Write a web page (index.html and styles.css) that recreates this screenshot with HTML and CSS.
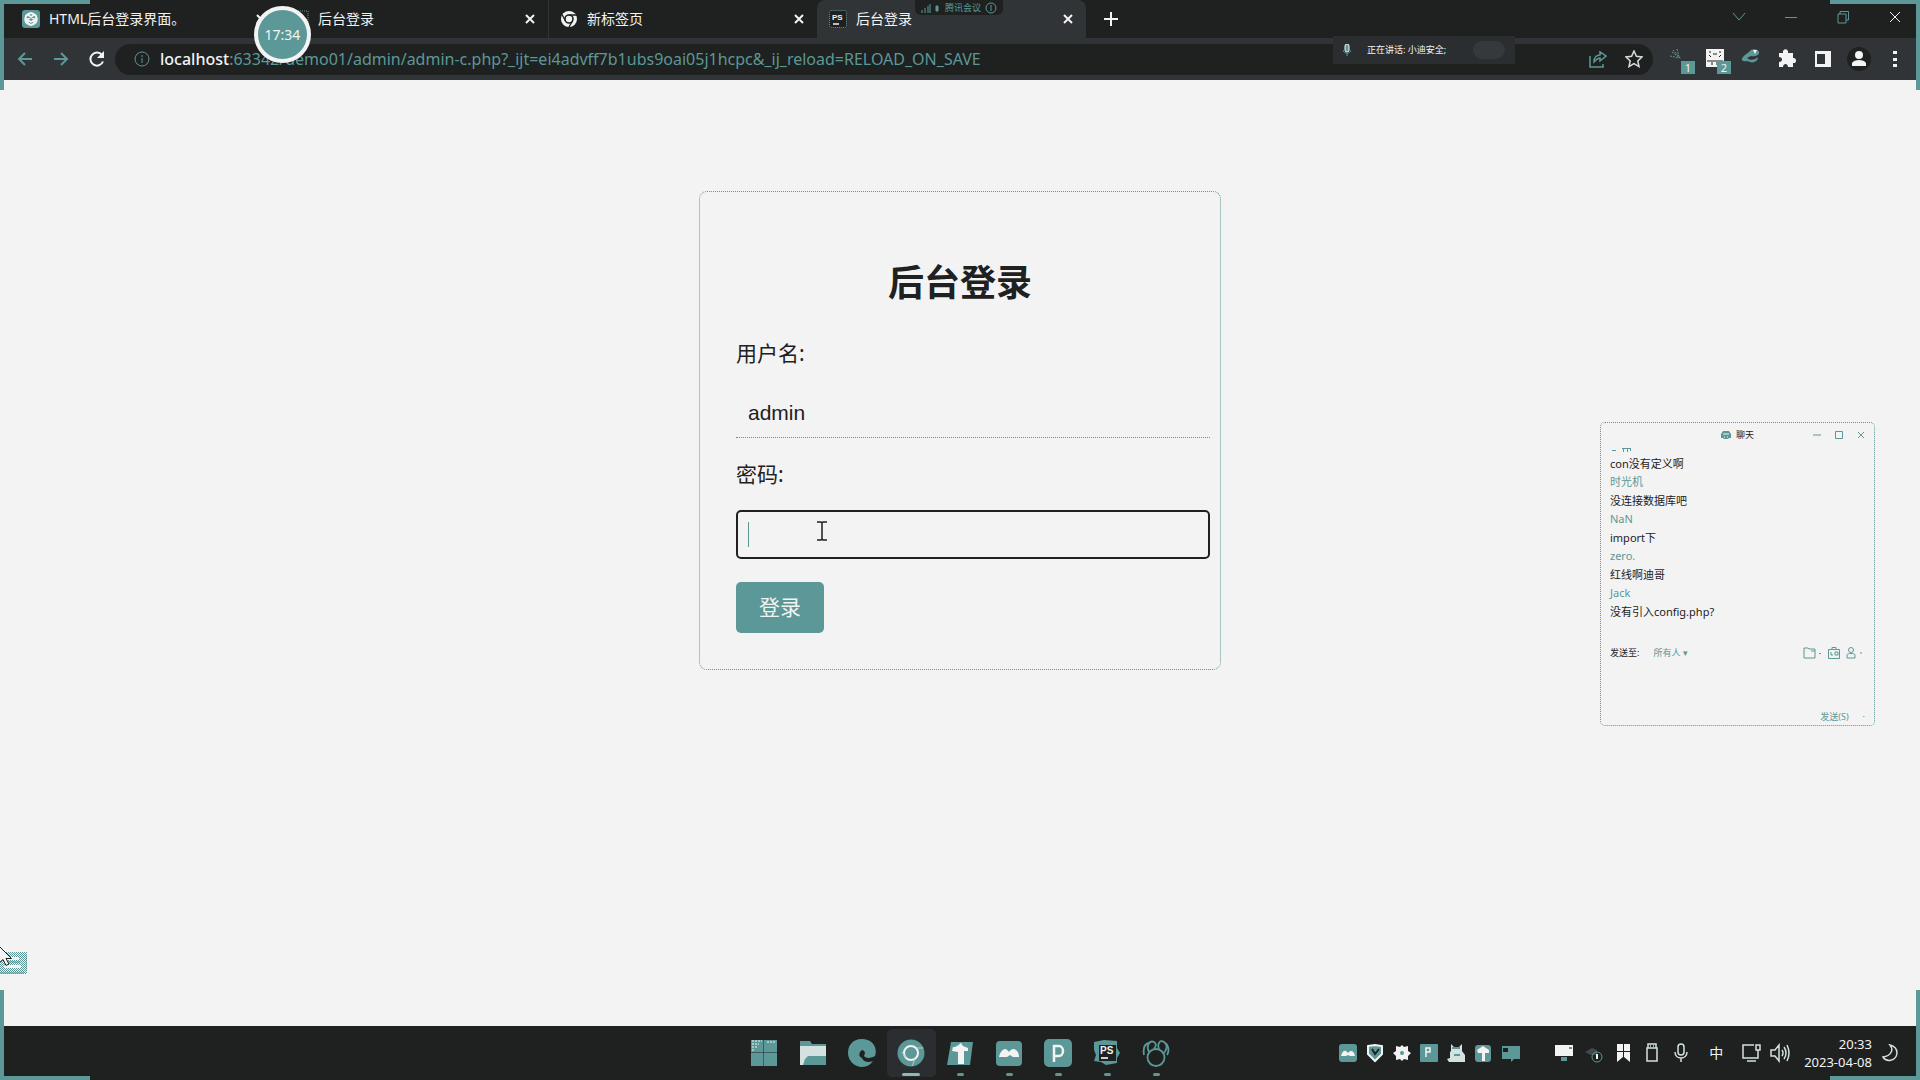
FILE: index.html
```html
<!DOCTYPE html>
<html lang="zh-CN">
<head>
<meta charset="utf-8">
<title>后台登录</title>
<link rel="stylesheet" href="styles.css">
</head>
<body>
<header class="browser">
  <div class="tabstrip">
    <nav class="tabs" aria-label="标签页">
      <div class="tab">
        <svg class="favicon" viewBox="0 0 18 18"><rect width="18" height="18" rx="3" fill="#5c9897"/><g fill="none" stroke="#f3f3f3" stroke-width="1.6"><circle cx="9" cy="9" r="6"/><path d="M9 3l5 3v6l-5 3-5-3V6zM6 5l6 4v5M12 5L6 9v5M4 9l5 3 5-3"/></g></svg>
        <span class="tab-title">HTML后台登录界面。</span>
        <button class="tab-close" aria-label="关闭"><svg viewBox="0 0 10 10"><path d="M1 1l8 8M9 1L1 9"/></svg></button>
      </div>
      <div class="tab">
        <svg class="favicon" viewBox="0 0 18 18"><rect x="1" y="1" width="16" height="16" fill="#1e2120" stroke="#5c9897" stroke-dasharray="1 1"/></svg>
        <span class="tab-title">后台登录</span>
        <button class="tab-close" aria-label="关闭"><svg viewBox="0 0 10 10"><path d="M1 1l8 8M9 1L1 9"/></svg></button>
      </div>
      <div class="tab tab-divided">
        <svg class="favicon" viewBox="0 0 18 18"><circle cx="9" cy="9" r="8" fill="#f3f3f3"/><circle cx="9" cy="9" r="4" fill="#f3f3f3" stroke="#1e2120" stroke-width="1.6"/><path d="M9 5h8M5.500 11L2 4.500M12.500 11L9 17" stroke="#1e2120" stroke-width="1.4"/></svg>
        <span class="tab-title">新标签页</span>
        <button class="tab-close" aria-label="关闭"><svg viewBox="0 0 10 10"><path d="M1 1l8 8M9 1L1 9"/></svg></button>
      </div>
      <div class="tab tab-active">
        <svg class="favicon" viewBox="0 0 18 18"><rect x=".5" y=".5" width="17" height="17" rx="2" fill="#1e2120" stroke="#5c9897" stroke-dasharray="1 1"/><text x="3" y="10" class="logo-text">PS</text><path d="M4 14h6" stroke="#f3f3f3" stroke-width="1.5"/></svg>
        <span class="tab-title">后台登录</span>
        <button class="tab-close" aria-label="关闭"><svg viewBox="0 0 10 10"><path d="M1 1l8 8M9 1L1 9"/></svg></button>
      </div>
      <button class="new-tab" aria-label="新标签页"><svg viewBox="0 0 14 14"><path d="M7 0v14M0 7h14"/></svg></button>
    </nav>
    <div class="window-controls">
      <button class="teal" aria-label="搜索标签页"><svg viewBox="0 0 14 14"><path d="M1 3l6 7 6-7"/></svg></button>
      <button class="teal" aria-label="最小化"><svg viewBox="0 0 14 14"><path d="M1 7.500h12"/></svg></button>
      <button class="teal" aria-label="还原"><svg viewBox="0 0 14 14"><path d="M2 4h8v9H2zM4 4V1.500h8.500V10H10"/></svg></button>
      <button aria-label="关闭"><svg viewBox="0 0 14 14"><path d="M2 2l10 10M12 2L2 12"/></svg></button>
    </div>
  </div>
  <div class="toolbar">
    <div class="nav-buttons">
      <button class="teal" aria-label="后退"><svg viewBox="0 0 16 16"><path d="M15 8H2M8 2L2 8l6 6"/></svg></button>
      <button class="teal" aria-label="前进"><svg viewBox="0 0 16 16"><path d="M1 8h13M8 2l6 6-6 6"/></svg></button>
      <button class="reload" aria-label="刷新"><svg viewBox="0 0 16 16"><path d="M14 10.500A6.500 6.500 0 1 1 13 4"/><path d="M15 0v7H8z" fill="#f3f3f3" stroke="none"/></svg></button>
    </div>
    <div class="address">
      <svg class="icon16" viewBox="0 0 16 16"><circle cx="8" cy="8" r="7"/><path d="M8 7v5M8 4v2"/></svg>
      <span class="url"><b>localhost</b>:63342/demo01/admin/admin-c.php?_ijt=ei4advff7b1ubs9oai05j1hcpc&amp;_ij_reload=RELOAD_ON_SAVE</span>
      <svg class="icon18 share" viewBox="0 0 18 18"><path d="M1 6v11h13v-3M5 12c0-5 3-7 6-7V2l6 4-6 5V8c-3 0-4 2-6 4z"/></svg>
      <svg class="icon18 star" viewBox="0 0 18 18"><path d="M9 1l2.400 5.300 5.600.7-4.200 3.900 1.200 5.700-5-2.900-5 2.900 1.200-5.700L1 7l5.600-.7z"/></svg>
    </div>
    <div class="extensions">
      <button aria-label="扩展 1"><svg viewBox="0 0 24 24"><path d="M5 5l8 6M10 2l2 8M3 9l9 2M6 3l8 9" stroke="#5c9897" stroke-dasharray="2 1"/></svg><span class="badge">1</span></button>
      <button aria-label="扩展 2"><svg viewBox="0 0 24 24"><path fill="#f3f3f3" stroke="none" d="M3 2h18v18H3z"/><path d="M6 5h2M16 5h2M6 8l2 2M18 8l-2 2M10 7h4M4 14h16M9 15v3M14 15v3" stroke="#1e2120"/></svg><span class="badge">2</span></button>
      <button aria-label="扩展 3"><svg viewBox="0 0 24 24"><path fill="#5c9897" stroke="none" d="M10 5c3-4 9-3 10 0s-4 5-8 4l-4 2c3 3 8 2 11-1 0 5-6 7-10 4-5 1-8-1-5-4 1-2 4-3 6-5z"/><path d="M14 3h4l-2 4z" fill="#f3f3f3" stroke="none"/></svg></button>
      <button aria-label="扩展程序"><svg viewBox="0 0 24 24"><path fill="#f3f3f3" stroke="none" d="M4 6h4c-1-5 6-5 5 0h5v5c4-1 4 6 0 5v4h-5c0-4-5-4-5 0H4v-5c4 0 4-5 0-5z"/></svg></button>
      <button aria-label="侧边栏"><svg viewBox="0 0 24 24"><path fill="#f3f3f3" stroke="none" fill-rule="evenodd" d="M4 4h16v16H4zM6 7v10h8V7z"/></svg></button>
      <button aria-label="用户"><svg viewBox="0 0 24 24"><circle cx="12" cy="12" r="12" fill="#1e2120" stroke="none"/><path fill="#f3f3f3" stroke="none" d="M5 19v-3c2-4 12-4 14 0v3z"/><circle cx="12" cy="8" r="4" fill="#f3f3f3" stroke="none"/></svg></button>
      <button aria-label="菜单"><svg viewBox="0 0 24 24"><path fill="#f3f3f3" stroke="none" d="M10 4h4v3h-4zM10 11h4v3h-4zM10 17h4v3h-4z"/></svg></button>
    </div>
  </div>
  <div class="meeting">
    <svg class="meeting-signal" viewBox="0 0 20 10"><path d="M1 7v3M4 5v5M7 3v7M9 1v9"/><path d="M15 3h2v5h-2z" fill="#5c9897"/></svg>
    <span>腾讯会议</span>
    <svg class="meeting-info" viewBox="0 0 12 12"><circle cx="6" cy="6" r="5"/><path d="M6 3v6"/></svg>
  </div>
  <div class="speaking">
    <svg class="speaking-mic" viewBox="0 0 8 12"><rect x="2" y="0" width="4" height="8" rx="2" fill="#5c9897"/><path d="M0 6c0 4 8 4 8 0M4 9v3" fill="none" stroke="#5c9897"/></svg>
    <span>正在讲话: 小迪安全;</span>
    <i class="speaking-blur"></i>
  </div>
  <div class="timer">17:34</div>
</header>

<main class="page">
  <form class="login">
    <h1>后台登录</h1>
    <label for="user">用户名:</label>
    <input class="field" id="user" type="text" value="admin">
    <label for="pass">密码:</label>
    <div class="field-wrap">
      <input class="field field-focused" id="pass" type="password">
      <i class="caret"></i>
      <svg class="text-pointer" viewBox="0 0 12 20"><path d="M1 1h4l1 1 1-1h4M6 2v16M1 19h4l1-1 1 1h4" fill="none" stroke="#1e2120" stroke-width="1.5"/></svg>
    </div>
    <button class="submit" type="button">登录</button>
  </form>

  <section class="chat" aria-label="聊天">
    <header class="chat-head">
      <span class="chat-title"><svg viewBox="0 0 10 10"><path d="M2 1h6l2 3v4H8L7 9H3L2 8H0V4z" fill="#5c9897"/><path d="M2 4h6M3 7h1M6 7h1" stroke="#f3f3f3"/></svg>聊天</span>
      <span class="chat-controls">
        <button aria-label="最小化"><svg viewBox="0 0 8 8"><path d="M0 4h8"/></svg></button>
        <button aria-label="最大化"><svg viewBox="0 0 8 8"><path d="M.5 .5h7v7h-7z"/></svg></button>
        <button aria-label="关闭"><svg viewBox="0 0 8 8"><path d="M1 1l6 6M7 1L1 7"/></svg></button>
      </span>
    </header>
    <div class="chat-log">
      <svg class="chat-cut" viewBox="0 0 24 8"><path d="M2 5.500h4M12 3.500h9M13.500 4v3M17.500 4v3M20.500 4v2"/></svg>
      <p>con没有定义啊</p>
      <p class="who">时光机</p>
      <p>没连接数据库吧</p>
      <p class="who">NaN</p>
      <p>import下</p>
      <p class="who">zero.</p>
      <p>红线啊迪哥</p>
      <p class="who">Jack</p>
      <p>没有引入config.php?</p>
    </div>
    <div class="chat-to">
      <span>发送至:</span><button class="who">所有人 ▾</button>
      <span class="chat-tools">
        <svg viewBox="0 0 20 12"><path d="M1 1h4l1 1h6v9H1zM8 4h4M16 6l1 1 1-1"/></svg>
        <svg class="tool-image" viewBox="0 0 12 12"><path d="M.5 2.500h11v9H.5zM4 2V.5h4V2M3 5v3h2M7 5h3v3H7z"/></svg>
        <svg viewBox="0 0 20 12"><circle cx="6" cy="3" r="2.500"/><path d="M2 11V8c0-2 8-2 8 0v3zM15 6h2"/></svg>
      </span>
    </div>
    <div class="chat-send"><button class="who">发送(S)</button><span>·</span></div>
  </section>

  <div class="dock">
    <svg class="dock-box" viewBox="0 0 27 22"><defs><pattern id="weave" width="2" height="2" patternUnits="userSpaceOnUse"><path fill="#5c9897" d="M0 0h1v1H0zM1 1h1v1H1z"/></pattern></defs><path d="M0 0h27v22H0z" fill="url(#weave)"/><path d="M4 5h15v3H4zM4 13h17v3H4z" fill="#f3f3f3"/><path d="M4 10h16" stroke="#5c9897"/><path d="M0 21h24l3-3V3" fill="none" stroke="#5c9897"/></svg>
    <svg class="pointer" viewBox="0 0 13 20"><path d="M.5 .5v16l3.500-3 3 6 3-1.500-3-5.500h5.500z" fill="#f3f3f3" stroke="#1e2120"/></svg>
  </div>
</main>

<footer class="taskbar">
  <span></span>
  <nav class="apps" aria-label="任务栏">
    <button aria-label="开始"><svg viewBox="0 0 28 28"><path fill="#5c9897" d="M1 1h12.500v12.500H1zM14 1h13v12.500H14zM1 14h12.500v13H1zM14 14h13v13H14z"/><path d="M2 2h10M2 5h7M2 8h6M2 11h3M17 3h8" stroke="#f3f3f3" stroke-dasharray="2 1"/></svg></button>
    <button aria-label="文件资源管理器"><svg viewBox="0 0 28 28"><path fill="#5c9897" d="M1 2h10l2 3h14v21H1z"/><path fill="#d5e1e0" d="M1 7h26v10H9l-3 3-2 6H1z"/></svg></button>
    <button aria-label="Edge"><svg viewBox="0 0 28 28"><path fill="#5c9897" d="M27 17c3-9-3-17-13-17S0 7 0 14s6 14 14 14c5 0 9-3 11-6-4 2-10 1-11-3-3-1-4-5 0-8 4 1 3 4 2 6 2 3 8 2 11 0z"/></svg></button>
    <button class="app-current" aria-label="Chrome"><svg viewBox="0 0 28 28"><circle cx="14" cy="14" r="13.500" fill="#5c9897"/><circle cx="14" cy="14" r="7" fill="#5c9897" stroke="#f3f3f3" stroke-width="2"/><path d="M20 9h6M9 19L5 13M18 20l-3 7" stroke="#b5cecd"/></svg></button>
    <button class="app-open" aria-label="Typora"><svg viewBox="0 0 28 28"><path fill="#5c9897" d="M5 3h22l-3 23H1z"/><path fill="#f3f3f3" d="M7 8c4 0 5-2 8-4l2 3 5 2v3h-4v13h-6V13l-6-1z"/></svg></button>
    <button class="app-open" aria-label="会议"><svg viewBox="0 0 28 28"><rect x="1" y="2" width="26" height="25" rx="4" fill="#5c9897"/><path fill="#f3f3f3" d="M4 18c1-5 4-8 6-8 2 0 3 2 4 3 1-2 3-3 5-3 3 1 5 4 5 8h-6l-3-2-3 2z"/></svg></button>
    <button class="app-open" aria-label="P"><svg viewBox="0 0 28 28"><rect width="28" height="28" rx="5" fill="#5c9897"/><path d="M10 23V7h5a4 5 0 0 1 0 10h-5" fill="none" stroke="#f3f3f3" stroke-width="2.500"/></svg></button>
    <button class="app-open" aria-label="PhpStorm"><svg viewBox="0 0 28 28"><path fill="#5c9897" d="M1 3l10-2 13 1v7l3 5-3 5v5l-11 2-5-3-7-1 2-6-2-5z"/><path fill="#1e2120" d="M6 6h17v16H6z"/><text x="7" y="15" class="logo-text logo-text-large">PS</text><path d="M8 19h7" fill="none" stroke="#f3f3f3" stroke-width="1.700"/></svg></button>
    <button class="app-open" aria-label="Navicat"><svg viewBox="0 0 28 28"><g fill="none" stroke="#5c9897" stroke-width="1.8"><circle cx="14" cy="18.500" r="8.500"/><path d="M7 13C4 7 7 1 12 3c3 2 2 4 0 7M17 10c-2-5 1-10 5-7 4 3 3 7 0 11M7 4c-5 1-6 6-5 12M22 3c4 2 6 8 3 13"/></g></svg></button>
  </nav>
  <div class="tray">
    <div class="tray-apps">
      <svg viewBox="0 0 20 20"><rect x="1" y="1" width="18" height="18" rx="3" fill="#5c9897"/><path d="M3 13c1-4 3-6 5-5l2 2c2-3 6-3 7 3h-5l-2-1-2 1z" fill="#f3f3f3"/></svg>
      <svg viewBox="0 0 20 20"><path d="M3 3l7-1 7 1v8l-7 7-7-7z" fill="#5c9897" stroke="#f3f3f3" stroke-width="2"/><path d="M7 6l3 5 4-5" fill="none" stroke="#1e2120" stroke-width="2"/></svg>
      <svg viewBox="0 0 20 20"><path d="M4 3l4 1 2-2 2 2 4-1v5l3 2-3 3v4l-4-1-2 2-2-2-4 1v-4l-3-3 3-2z" fill="#f3f3f3"/><circle cx="10" cy="10" r="2" fill="#5c9897"/></svg>
      <svg viewBox="0 0 20 20"><rect x="1" y="1" width="18" height="18" rx="1" fill="#5c9897"/><path d="M7 14V5h4v4H7" fill="none" stroke="#f3f3f3" stroke-width="1.500"/></svg>
      <svg viewBox="0 0 20 20"><path d="M5 8V1l3 3h5l3-3v7l3 4v7H3l-2-3 3-1V9z" fill="#d5e1e0"/><path d="M6 5h8M8 12h6" stroke="#5c9897" stroke-width="2"/></svg>
      <svg viewBox="0 0 20 20"><rect x="2" y="2" width="16" height="17" rx="3" fill="#5c9897"/><path d="M4 7l6-4 6 4v3h-4v8H9v-8H5z" fill="#f3f3f3"/></svg>
      <svg viewBox="0 0 20 20"><path d="M2 3h18v13h-6l-3 3v-3H2z" fill="#5c9897"/><path d="M3 5h5v4H3z" fill="#1e2120"/></svg>
    </div>
    <div class="tray-system">
      <svg viewBox="0 0 20 20"><path d="M1 2h18v11H1z" fill="#f3f3f3"/><path d="M15 4h3v2h-3zM7 14h6v4H7z" fill="#5c9897"/></svg>
      <svg viewBox="0 0 20 20"><path d="M1 9l7-4 5 2v5H7z" fill="#44494b"/><circle cx="13" cy="14" r="5" fill="none" stroke="#5c9897"/><path d="M13 11v5" stroke="#f3f3f3" stroke-width="2"/></svg>
      <svg viewBox="0 0 20 20"><path fill="#f3f3f3" d="M4 1h6v7H4zM11 1h6v7h-6zM4 9h6v5l-6 5zM11 9h6v10l-6-5z"/></svg>
      <svg viewBox="0 0 20 20" class="line"><path d="M6 1h8v4H6zM5 5h10v13H5zM8 3h1M11 3h1"/></svg>
      <svg viewBox="0 0 20 20" class="line"><rect x="7" y="1" width="6" height="11" rx="3"/><path d="M4 9c0 8 12 8 12 0M10 15v4"/></svg>
      <span class="ime">中</span>
      <svg viewBox="0 0 20 20" class="line"><path d="M13 2H2v13h15v-5M6 18h9M15 2h4v5h-4zM17 7v5"/></svg>
      <svg viewBox="0 0 20 20" class="line"><path d="M1 7h4l4-5v16l-4-5H1zM12 7q2 3 0 6M14 4q4 6 0 12M17 2q4 8 0 16"/></svg>
    </div>
    <time class="clock" datetime="2023-04-08T20:33">20:33<br>2023-04-08</time>
    <svg class="moon" viewBox="0 0 18 18"><path d="M9 1c4 5 1 11-7 12 3 5 13 5 14-4 0-4-3-7-7-8z"/></svg>
  </div>
</footer>

<i class="corner corner-tl"></i><i class="corner corner-tr"></i><i class="corner corner-bl"></i><i class="corner corner-br"></i>
</body>
</html>
```
FILE: styles.css
```css
:root {
  --ink: #1e2120;
  --bar: #313437;
  --teal: #5c9897;
  --paper: #f3f3f3;
}
* { box-sizing: border-box; }
body {
  margin: 0;
  min-height: 100vh;
  display: grid;
  grid-template-rows: auto 1fr auto;
  position: relative;
  overflow: hidden;
  background: var(--paper);
  color: var(--ink);
  font-family: "Noto Sans", "Noto Sans CJK SC", sans-serif;
}
button {
  margin: 0;
  padding: 0;
  border: 0;
  background: none;
  color: inherit;
  font: inherit;
}
svg { display: block; flex: none; }
.logo-text { fill: var(--paper); font: bold 8px "Liberation Sans", sans-serif; }
.logo-text-large { font-size: 10px; }

/* browser chrome */
.browser { position: relative; background: var(--ink); color: var(--paper); }
.browser svg { fill: none; stroke: currentColor; }
.browser .favicon { stroke: none; }
.teal { color: var(--teal); }
.tabstrip { display: flex; justify-content: space-between; height: 38px; padding-left: 10px; }
.tabs { display: flex; flex: 1; align-items: center; min-width: 0; }
.tab {
  display: flex;
  flex: 0 1 269px;
  align-items: center;
  gap: 9px;
  height: 38px;
  padding: 0 12px;
  font-size: 14px;
  line-height: 20px;
  white-space: nowrap;
}
.tab-divided { box-shadow: inset 1px 0 var(--bar); }
.tab-active { background: var(--bar); border-radius: 8px 8px 0 0; }
.favicon { width: 18px; height: 18px; }
.tab-title { flex: 1; }
.tab-close svg { width: 10px; height: 10px; margin-right: 1px; stroke-width: 2; }
.new-tab { margin-left: 18px; }
.new-tab svg { width: 14px; height: 14px; stroke-width: 2; }
.window-controls { display: flex; align-items: center; gap: 38px; height: 34px; padding-right: 18px; }
.window-controls svg { width: 14px; height: 14px; }
.toolbar { display: flex; align-items: center; height: 42px; padding-right: 13px; background: var(--bar); }
.nav-buttons { display: flex; gap: 20px; width: 115px; padding-left: 17px; }
.nav-buttons svg { width: 16px; height: 16px; stroke-width: 2; }
.address {
  display: flex;
  flex: 1;
  align-items: center;
  min-width: 0;
  height: 31px;
  padding: 0 10px 0 19px;
  border-radius: 16px;
  background: var(--ink);
  color: var(--teal);
}
.icon16 { width: 16px; height: 16px; }
.icon18 { width: 18px; height: 18px; }
.share, .star { stroke-width: 1.5; }
.star { margin-left: 18px; color: #d5e1e0; }
.url { flex: 1; margin-left: 10px; font-size: 16px; line-height: 24px; white-space: nowrap; }
.url b { color: var(--paper); font-weight: 500; }
.extensions { display: flex; gap: 12px; padding-left: 14px; }
.extensions button { position: relative; }
.extensions svg { width: 24px; height: 24px; }
.badge {
  position: absolute;
  right: -4px;
  bottom: -3px;
  width: 14px;
  background: var(--teal);
  font-size: 11px;
  line-height: 13px;
  text-align: center;
}
.meeting {
  position: absolute;
  top: 0;
  left: 915px;
  display: flex;
  align-items: center;
  gap: 4px;
  height: 15px;
  padding: 0 6px;
  border-radius: 0 0 6px 6px;
  background: var(--ink);
  color: var(--teal);
  font-size: 9px;
  line-height: 15px;
  white-space: nowrap;
}
.meeting-signal { width: 20px; height: 10px; }
.meeting-info { width: 12px; height: 12px; }
.speaking {
  position: absolute;
  top: 36px;
  right: 405px;
  display: flex;
  align-items: center;
  gap: 16px;
  width: 182px;
  height: 28px;
  padding: 0 10px;
  background: #2b2e30;
  font-size: 9px;
  line-height: 14px;
  white-space: nowrap;
}
.speaking-mic { width: 8px; height: 12px; }
.speaking-blur { width: 32px; height: 18px; margin-left: auto; border-radius: 9px; background: #36393c; }
.timer {
  position: absolute;
  top: 6px;
  left: 254px;
  width: 57px;
  height: 57px;
  border: 4px solid var(--paper);
  border-radius: 50%;
  background: var(--teal);
  font-size: 14px;
  line-height: 49px;
  text-align: center;
}

/* login page */
.page { position: relative; padding-top: 111px; }
.login {
  display: flex;
  flex-direction: column;
  align-items: flex-start;
  gap: 22px;
  width: 522px;
  margin: 0 auto;
  padding: 36px;
  border: 1px dotted var(--teal);
  border-radius: 8px;
  font-size: 21px;
  line-height: 28px;
}
.login h1 { align-self: center; margin: 30px 0 9px; font-size: 36px; line-height: 50px; }
.field-wrap { position: relative; width: 100%; }
.field {
  display: block;
  width: 474px;
  height: 49px;
  padding: 12px;
  border: 0;
  border-bottom: 1px dotted var(--teal);
  background: none;
  color: var(--ink);
  font: 21px/24px "Liberation Sans", sans-serif;
}
.field-focused { border: 2px solid var(--ink); border-radius: 5px; outline: 0; }
.caret { position: absolute; top: 12px; left: 12px; width: 1px; height: 25px; background: var(--teal); }
.text-pointer { position: absolute; top: 11px; left: 80px; width: 12px; height: 20px; }
.submit { margin-top: 1px; padding: 11px 23px 12px; border-radius: 5px; background: var(--teal); color: var(--paper); }

/* floating chat window */
.chat {
  position: absolute;
  top: 342px;
  right: 45px;
  width: 275px;
  height: 304px;
  padding: 2px 9px;
  border: 1px dotted var(--teal);
  border-radius: 5px;
  background: var(--paper);
  font-size: 11px;
  line-height: 14px;
}
.chat svg { fill: none; stroke: var(--teal); }
.chat-head { position: relative; display: flex; justify-content: center; height: 20px; align-items: center; font-size: 9px; }
.chat-title { display: flex; gap: 5px; align-items: center; }
.chat-title svg { width: 10px; height: 10px; stroke: none; }
.chat-controls { position: absolute; right: 0; display: flex; gap: 14px; }
.chat-controls svg { width: 8px; height: 8px; }
.chat-log { display: grid; gap: 4px; }
.chat-log p { margin: 0; height: 14px; white-space: nowrap; }
.chat-log .who { height: 15px; }
.who { color: var(--teal); }
.chat-cut { width: 24px; height: 8px; }
.chat-to { display: flex; align-items: center; gap: 14px; margin-top: 27px; font-size: 9px; }
.chat-tools { display: flex; gap: 5px; margin-left: auto; }
.chat-tools svg { width: 20px; height: 12px; }
.chat-tools .tool-image { width: 12px; }
.chat-send { display: flex; justify-content: flex-end; gap: 14px; margin-top: 50px; font-size: 9px; color: var(--teal); }

.dock { position: absolute; left: 0; bottom: 52px; width: 27px; height: 28px; }
.dock-box { position: absolute; left: 0; bottom: 0; width: 27px; height: 22px; }
.pointer { position: absolute; top: 0; left: -1px; width: 13px; height: 20px; }

/* taskbar */
.taskbar {
  display: grid;
  grid-template-columns: 1fr auto 1fr;
  align-items: center;
  height: 54px;
  background: var(--ink);
  color: var(--paper);
}
.apps { display: flex; }
.apps button { position: relative; display: grid; place-items: center; width: 49px; height: 48px; }
.apps svg { width: 28px; height: 28px; }
.app-current { border-radius: 5px; background: #2b2e30; }
.app-current::after, .app-open::after {
  content: "";
  position: absolute;
  bottom: 1px;
  width: 7px;
  height: 3px;
  border-radius: 2px;
  background: var(--teal);
}
.app-current::after { width: 18px; background: #8fb8b7; }
.tray { display: flex; justify-content: flex-end; align-items: center; padding-right: 21px; }
.tray svg, .ime { width: 20px; height: 20px; }
.tray-apps { display: flex; gap: 7px; margin-right: 34px; }
.tray-system { display: flex; gap: 9px; margin-right: 14px; }
.tray-system svg:first-child { margin-right: 1px; }
.ime { margin: 0 6px; font-size: 14px; line-height: 20px; text-align: center; }
.line { fill: none; stroke: #d5e1e0; stroke-width: 1.5; }
.clock { font-size: 13px; line-height: 18px; text-align: right; }
.tray .moon { width: 18px; height: 18px; margin-left: 9px; fill: none; stroke: #d5e1e0; stroke-width: 1.5; }

/* capture frame corners */
.corner { position: absolute; width: 90px; height: 90px; border: 0 solid var(--teal); pointer-events: none; }
.corner-tl { top: 0; left: 0; border-width: 4px 0 0 4px; }
.corner-tr { top: 0; right: 0; border-width: 4px 4px 0 0; }
.corner-bl { bottom: 0; left: 0; border-width: 0 0 4px 4px; }
.corner-br { bottom: 0; right: 0; border-width: 0 4px 4px 0; }
```
